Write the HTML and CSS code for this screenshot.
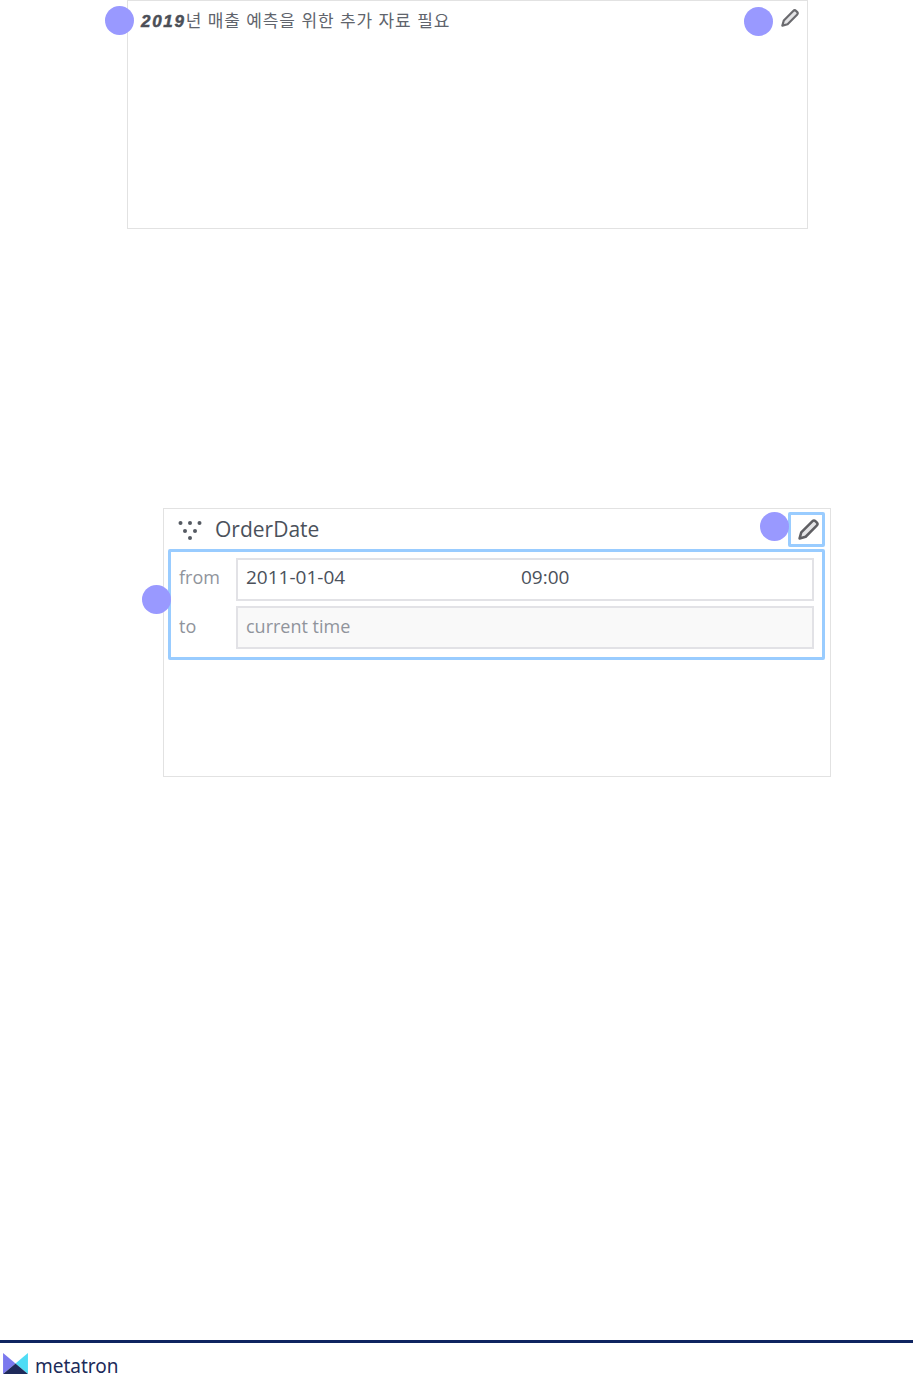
FILE: index.html
```html
<!DOCTYPE html>
<html lang="ko">
<head>
    <meta charset="UTF-8">
    <meta name="viewport" content="width=device-width, initial-scale=1.0">
    <title>metatron</title>
    <link rel="stylesheet" href="styles.css">
</head>
<body>
    <div class="page">
        <div class="text-card">
            <span class="dot dot-title"></span>
            <span class="dot dot-edit"></span>
            <p class="memo"><b>2019</b>년 매출 예측을 위한 추가 자료 필요</p>
            <svg class="pencil pencil-small" viewBox="0 0 20 20"><path d="M1.5 18.5l1.6-5.8L13.6 2.2q1.6-1.6 3.2 0l1 1q1.6 1.6 0 3.2L7.3 16.9z" fill="#e4e4e6" stroke="#6a6a6e" stroke-width="2.4" stroke-linejoin="round"/></svg>
        </div>

        <div class="filter-card">
            <span class="dot dot-head"></span>
            <span class="dot dot-range"></span>
            <div class="filter-head">
                <svg class="dots-icon" viewBox="0 0 24 22">
                    <circle cx="2.5" cy="5" r="2"/><circle cx="12" cy="5" r="2"/><circle cx="21.5" cy="5" r="2"/>
                    <circle cx="7" cy="13" r="2"/><circle cx="17" cy="13" r="2"/>
                    <circle cx="12" cy="20" r="2"/>
                </svg>
                <span class="filter-name">OrderDate</span>
                <div class="edit-box">
                    <svg class="pencil" viewBox="0 0 20 20"><path d="M1.5 18.5l1.6-5.8L13.6 2.2q1.6-1.6 3.2 0l1 1q1.6 1.6 0 3.2L7.3 16.9z" fill="#e4e4e6" stroke="#5f5f63" stroke-width="2.4" stroke-linejoin="round"/></svg>
                </div>
            </div>
            <div class="range-box">
                <div class="range-row">
                    <span class="range-label">from</span>
                    <div class="range-input"><span class="range-date">2011-01-04</span><span>09:00</span></div>
                </div>
                <div class="range-row">
                    <span class="range-label range-label-to">to</span>
                    <div class="range-input range-off">current time</div>
                </div>
            </div>
        </div>

        <div class="footer">
            <svg class="logo" viewBox="0 0 26 22">
                <polygon points="0,0 13,11 0,22" fill="#7a78ee"/>
                <polygon points="26,0 13,11 26,22" fill="#4fdcf5"/>
                <polygon points="0,22 13,11 26,22" fill="#1e2a5a"/>
            </svg>
            <span class="logo-text">metatron</span>
        </div>
    </div>
</body>
</html>
```

FILE: styles.css
```css
body {
    margin: 0;
    font-family: "Open Sans", "Noto Sans CJK KR", sans-serif;
    color: #4b515b;
    background: #fff;
}
.page {
    display: flex;
    flex-direction: column;
    height: 1374px;
}
.text-card {
    position: relative;
    flex: none;
    box-sizing: border-box;
    width: 681px;
    height: 229px;
    margin-left: 127px;
    padding: 9px 13px;
    border: 1px solid #e2e2e2;
}
.memo {
    margin: 0;
    font-family: "Noto Sans CJK KR", sans-serif;
    font-size: 17px;
    line-height: 20px;
    letter-spacing: 0.85px;
    color: #60646c;
}
.memo b {
    font-family: "Liberation Sans", sans-serif;
    font-style: italic;
    letter-spacing: 1.7px;
    -webkit-text-stroke: 0.5px #4b4f57;
    color: #4b4f57;
}
.dot {
    position: absolute;
    width: 29px;
    height: 29px;
    border-radius: 50%;
    background: #9999ff;
}
.dot-title { left: -23px; top: 5px; }
.dot-edit { left: 616px; top: 6px; }
.dot-head { left: 596px; top: 3px; }
.dot-range { left: -22px; top: 76px; }
.pencil {
    width: 21px;
    height: 21px;
    margin-left: 4px;
}
.pencil-small {
    position: absolute;
    right: 8px;
    top: 8px;
    width: 18px;
    height: 18px;
}
.filter-card {
    position: relative;
    flex: none;
    box-sizing: border-box;
    width: 668px;
    height: 269px;
    margin: 279px 0 0 163px;
    padding: 2px 5px 0 4px;
    border: 1px solid #e2e2e2;
}
.filter-head {
    display: flex;
    align-items: center;
    height: 36px;
    margin-bottom: 2px;
    padding-left: 10px;
}
.dots-icon {
    width: 24px;
    height: 22px;
    fill: #555a62;
    margin-right: 13px;
}
.filter-name {
    flex: 1;
    font-size: 21px;
}
.edit-box {
    box-sizing: border-box;
    display: flex;
    align-items: center;
    justify-content: center;
    width: 37px;
    height: 35px;
    border: 3px solid #99ccff;
    border-radius: 2px;
}
.range-box {
    box-sizing: border-box;
    height: 111px;
    padding: 6px 8px 0 8px;
    border: 3px solid #99ccff;
    border-radius: 2px;
}
.range-row {
    display: flex;
    align-items: center;
    margin-bottom: 5px;
}
.range-label {
    width: 57px;
    padding-bottom: 5px;
    font-size: 18px;
    color: #90949c;
}
.range-label-to {
    padding-bottom: 3px;
}
.range-input {
    box-sizing: border-box;
    display: flex;
    align-items: center;
    flex: 1;
    height: 43px;
    padding: 0 0 5px 8px;
    border: 2px solid #e2e2e6;
    font-size: 19px;
}
.range-date {
    width: 275px;
}
.range-off {
    padding-bottom: 4px;
    background: #f9f9f9;
    font-size: 18px;
    color: #90949c;
}
.footer {
    display: flex;
    flex: none;
    align-items: flex-start;
    box-sizing: border-box;
    height: 34px;
    margin-top: 563px;
    padding: 10px 0 0 3px;
    border-top: 3px solid #0f2460;
}
.logo {
    width: 25px;
    height: 21px;
    margin-right: 7px;
}
.logo-text {
    margin-top: 5px;
    font-family: "Noto Sans", sans-serif;
    font-size: 19px;
    line-height: 16px;
    color: #1c2b5a;
}
```
